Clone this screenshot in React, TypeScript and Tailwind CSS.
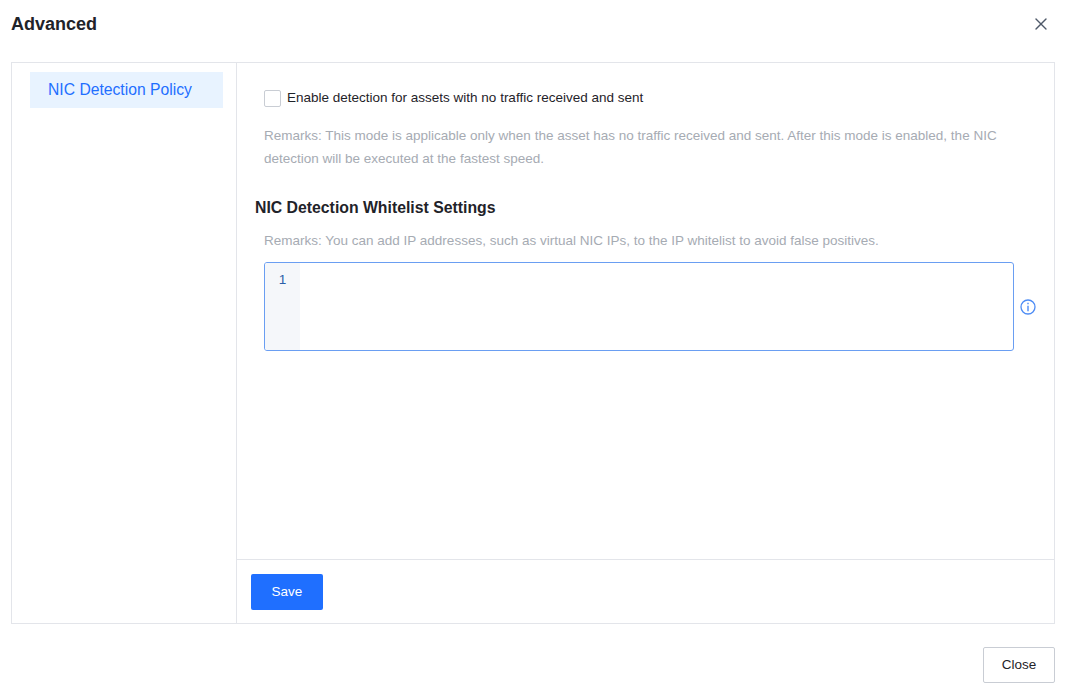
import { X } from 'lucide-react';

export default function App() {
  return (
    <div className="w-[1066px] h-[694px] bg-white flex flex-col font-['Liberation_Sans',Arial,sans-serif] text-[#1f2329]">
      <div className="h-[48px] flex items-center justify-between pl-[11px] pr-[15px] mb-[14px]">
        <h1 className="text-[18px] font-bold text-[#1f2329]">Advanced</h1>
        <X className="w-[20px] h-[20px] text-[#4e5969]" strokeWidth={1.6} />
      </div>

      <div className="mx-[11px] h-[562px] border border-[#e3e5ea] flex">
        <div className="w-[225px] border-r border-[#e3e5ea] pl-[18px] pt-[9px] shrink-0">
          <div className="w-[193px] h-[36px] bg-[#e8f3ff] flex items-center pl-[18px] text-[15.7px] text-[#1f6fff]">
            NIC Detection Policy
          </div>
        </div>

        <div className="flex-1 flex flex-col">
          <div className="flex-1 pt-[27px] pl-[27px]">
            <label className="flex items-center h-[17px] text-[13.5px] text-[#1f2329]">
              <span className="w-[17px] h-[17px] border border-[#c9cdd4] rounded-[2px] bg-white shrink-0" />
              <span className="ml-[6px]">Enable detection for assets with no traffic received and sent</span>
            </label>
            <p className="mt-[17px] w-[750px] text-[13.5px] leading-[23px] text-[#a6abb3]">
              Remarks: This mode is applicable only when the asset has no traffic received and sent. After this mode is enabled, the NIC detection will be executed at the fastest speed.
            </p>

            <h2 className="mt-[27px] -ml-[9px] text-[15.8px] leading-[22px] font-bold text-[#1f2329]">
              NIC Detection Whitelist Settings
            </h2>
            <p className="mt-[10px] text-[13.5px] leading-[23px] text-[#a6abb3]">
              Remarks: You can add IP addresses, such as virtual NIC IPs, to the IP whitelist to avoid false positives.
            </p>

            <div className="mt-[10px] flex items-center">
              <div className="w-[750px] h-[89px] border border-[#6a9ef2] rounded-[3px] flex overflow-hidden">
                <div className="w-[35px] bg-[#f5f7fa] text-[13.5px] text-[#2b5fa8] text-center pt-[8px] leading-[18px]">1</div>
                <div className="flex-1" />
              </div>
              <svg className="ml-[6px]" width="16" height="16" viewBox="0 0 16 16" fill="none">
                <circle cx="8" cy="8" r="7" stroke="#4d8cf5" strokeWidth="1.3" />
                <line x1="8" y1="3.8" x2="8" y2="5.3" stroke="#4d8cf5" strokeWidth="1.4" />
                <line x1="8" y1="6.8" x2="8" y2="12.2" stroke="#4d8cf5" strokeWidth="1.4" />
              </svg>
            </div>
          </div>

          <div className="h-[64px] border-t border-[#e3e5ea] pl-[14px] pt-[14px]">
            <button className="w-[72px] h-[36px] bg-[#1f6fff] rounded-[2px] text-white text-[13.5px]">Save</button>
          </div>
        </div>
      </div>

      <div className="flex justify-end pr-[11px] mt-[23px]">
        <button className="w-[72px] h-[36px] border border-[#c9cdd4] rounded-[2px] bg-white text-[13.5px] text-[#1f2329]">Close</button>
      </div>
    </div>
  );
}
